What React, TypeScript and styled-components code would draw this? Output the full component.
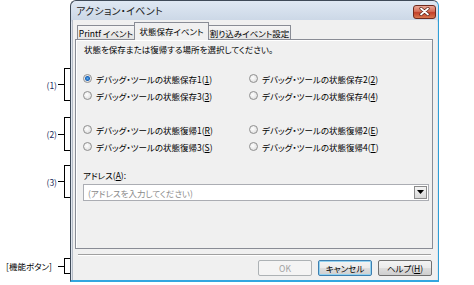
import React from 'react';
import styled, {createGlobalStyle, css} from "styled-components";

const font = `"Noto Sans CJK JP", "Noto Sans", sans-serif`;

const GlobalStyle = createGlobalStyle`
    html, body {
        margin: 0;
        padding: 0;
        background: #ffffff;
    }
    body {
        font-family: ${font};
        font-feature-settings: "palt";
        font-size: 8.5px;
        color: #000000;
    }
`;

type CalloutPropsType = {
    label: string
    top: number
    height: number
    wide?: boolean
}

const Callout = (props: CalloutPropsType) => {
    return (
        <StyledCallout $top={props.top} $height={props.height}>
            <CalloutLabel $wide={props.wide}>{props.label}</CalloutLabel>
            <Dash/>
            <Bracket/>
        </StyledCallout>
    );
};

type RadioPropsType = {
    text: string
    keyChar: string
    checked?: boolean
}

const Radio = (props: RadioPropsType) => {
    return (
        <RadioRow>
            <RadioCircle $checked={props.checked}/>
            <span>{props.text}(<u>{props.keyChar}</u>)</span>
        </RadioRow>
    );
};

const CloseIcon = () => (
    <svg width="11" height="9" viewBox="0 0 11 9">
        <path d="M2 1.5 L9 7.5 M9 1.5 L2 7.5" stroke="#5a2218" strokeWidth="3.2" strokeLinecap="round"/>
        <path d="M2 1.5 L9 7.5 M9 1.5 L2 7.5" stroke="#ffffff" strokeWidth="1.8" strokeLinecap="round"/>
    </svg>
);

export default function App() {
    return (
        <>
            <GlobalStyle/>
            <Page>
                <Annotations>
                    <Callout label={"(1)"} top={68} height={33}/>
                    <Callout label={"(2)"} top={16} height={34}/>
                    <Callout label={"(3)"} top={14} height={33}/>
                    <Callout label={"[機能ボタン]"} top={60} height={16} wide/>
                </Annotations>
                <Window>
                    <TitleBar>
                        <Title>アクション・イベント</Title>
                        <CloseButton><CloseIcon/></CloseButton>
                    </TitleBar>
                    <Body>
                        <TabBar>
                            <Tab $w={58}>Printf イベント</Tab>
                            <Tab $w={75} $active>状態保存イベント</Tab>
                            <Tab $w={83}>割り込みイベント設定</Tab>
                        </TabBar>
                        <Panel>
                            <Description>状態を保存または復帰する場所を選択してください。</Description>
                            <RadioGrid $mt={15}>
                                <Radio text={"デバッグ・ツールの状態保存1"} keyChar={"1"} checked/>
                                <Radio text={"デバッグ・ツールの状態保存2"} keyChar={"2"}/>
                                <Radio text={"デバッグ・ツールの状態保存3"} keyChar={"3"}/>
                                <Radio text={"デバッグ・ツールの状態保存4"} keyChar={"4"}/>
                            </RadioGrid>
                            <RadioGrid $mt={17}>
                                <Radio text={"デバッグ・ツールの状態復帰1"} keyChar={"R"}/>
                                <Radio text={"デバッグ・ツールの状態復帰2"} keyChar={"E"}/>
                                <Radio text={"デバッグ・ツールの状態復帰3"} keyChar={"S"}/>
                                <Radio text={"デバッグ・ツールの状態復帰4"} keyChar={"T"}/>
                            </RadioGrid>
                            <FieldLabel>アドレス(<u>A</u>):</FieldLabel>
                            <Combo>
                                <Placeholder>(アドレスを入力してください)</Placeholder>
                                <ComboButton>
                                    <svg width="7" height="5" viewBox="0 0 7 5">
                                        <path d="M0 0 H7 L3.5 4 Z" fill="#000000"/>
                                    </svg>
                                </ComboButton>
                            </Combo>
                        </Panel>
                        <Separator/>
                        <ButtonRow>
                            <Button $disabled>OK</Button>
                            <Button $default>キャンセル</Button>
                            <Button>ヘルプ(<u>H</u>)</Button>
                        </ButtonRow>
                    </Body>
                </Window>
            </Page>
        </>
    );
}

const Page = styled.div`
    display: flex;
    align-items: flex-start;
    width: 474px;
    height: 285px;
    overflow: hidden;
`;

const Annotations = styled.div`
    display: flex;
    flex-direction: column;
    width: 70px;
    flex-shrink: 0;
`;

const StyledCallout = styled.div<{ $top: number, $height: number }>`
    display: flex;
    align-items: center;
    justify-content: flex-end;
    margin-top: ${props => props.$top}px;
    height: ${props => props.$height}px;
`;

const CalloutLabel = styled.span<{ $wide?: boolean }>`
    font-size: 8.5px;
    line-height: 10px;
    color: ${props => props.$wide ? "#000000" : "#1b2c5c"};
    margin-right: ${props => props.$wide ? "6px" : "1px"};
    white-space: nowrap;
`;

const Dash = styled.div`
    width: 6px;
    height: 1px;
    background: #000000;
`;

const Bracket = styled.div`
    width: 6px;
    height: 100%;
    box-sizing: border-box;
    border: 1px solid #000000;
    border-right: none;
`;

const Window = styled.div`
    width: 369px;
    height: 282px;
    box-sizing: border-box;
    display: flex;
    flex-direction: column;
    border: 1px solid #3f4a58;
    border-right-color: #2f9fd6;
    border-bottom: 2px solid #33a7e0;
    border-radius: 6px 6px 0 0;
    background: linear-gradient(#dfe8f3, #cbd7e6 20px, #dfe5ee 21px);
    flex-shrink: 0;
`;

const TitleBar = styled.div`
    display: flex;
    align-items: center;
    justify-content: space-between;
    height: 19px;
    padding: 0 2px 0 5px;
`;

const Title = styled.span`
    font-size: 10px;
    color: #1e1e1e;
    letter-spacing: 0.3px;
`;

const CloseButton = styled.div`
    display: flex;
    align-items: center;
    justify-content: center;
    width: 23px;
    height: 14px;
    box-sizing: border-box;
    margin-top: 2px;
    border: 1px solid #6f2a1e;
    border-radius: 3px;
    background: linear-gradient(#eaa898, #d66e58 45%, #c3402a 55%, #d9774f);
`;

const Body = styled.div`
    flex: 1;
    display: flex;
    flex-direction: column;
    margin: 0 1px 0 1px;
    padding: 2px 4px 0 2px;
    background: #f0f0f0;
    border-left: 1px solid #b5bcc6;
`;

const TabBar = styled.div`
    display: flex;
    align-items: flex-end;
    height: 17px;
    padding-left: 2px;
    position: relative;
    z-index: 1;
`;

const Tab = styled.div<{ $w: number, $active?: boolean }>`
    width: ${props => props.$w}px;
    height: 14px;
    box-sizing: border-box;
    display: flex;
    align-items: center;
    justify-content: center;
    border: 1px solid #898c95;
    border-bottom: none;
    margin-right: -1px;
    background: linear-gradient(#f5f5f5, #e3e3e3);
    white-space: nowrap;
    ${props => props.$active && css`
        height: 18px;
        margin-bottom: -1px;
        background: #f0f0f0;
        padding-bottom: 2px;
        position: relative;
        z-index: 2;
    `}
`;

const Panel = styled.div`
    height: 210px;
    box-sizing: border-box;
    display: flex;
    flex-direction: column;
    padding: 3px 6px 0 7px;
    border: 1px solid #898c95;
    box-shadow: inset 1px 1px 0 #ffffff;
    background: #f0f0f0;
`;

const Description = styled.div`
    line-height: 12px;
    margin-left: 1px;
`;

const RadioGrid = styled.div<{ $mt: number }>`
    display: grid;
    grid-template-columns: 166px 1fr;
    grid-auto-rows: 17px;
    margin-top: ${props => props.$mt}px;
`;

const RadioRow = styled.div`
    display: flex;
    align-items: center;
    gap: 4px;
    white-space: nowrap;
`;

const RadioCircle = styled.span<{ $checked?: boolean }>`
    width: 9px;
    height: 9px;
    box-sizing: border-box;
    border-radius: 50%;
    border: 1px solid #8f8f8f;
    background: ${props => props.$checked
        ? "radial-gradient(circle, #5ab0f0 0, #1c63b8 2px, #e8e8e8 3px, #ffffff 4px)"
        : "radial-gradient(circle at 40% 40%, #ffffff, #d6d6d6)"};
`;

const FieldLabel = styled.div`
    line-height: 12px;
    margin-top: 14px;
`;

const Combo = styled.div`
    display: flex;
    align-items: center;
    justify-content: space-between;
    width: 346px;
    height: 17px;
    box-sizing: border-box;
    margin-top: 3px;
    padding: 0 1px 0 4px;
    border: 1px solid #abadb3;
    background: #ffffff;
`;

const Placeholder = styled.span`
    color: #8a8a8a;
`;

const ComboButton = styled.div`
    display: flex;
    align-items: center;
    justify-content: center;
    width: 13px;
    height: 13px;
    box-sizing: border-box;
    border: 1px solid #8a8a8a;
    background: linear-gradient(#f4f4f4, #d8d8d8);
`;

const Separator = styled.div`
    height: 1px;
    margin: 5px 2px 0 3px;
    background: #a0a0a0;
    border-bottom: 1px solid #ffffff;
`;

const ButtonRow = styled.div`
    display: flex;
    justify-content: flex-end;
    gap: 6px;
    margin-top: 4px;
    padding-right: 1px;
`;

const Button = styled.div<{ $disabled?: boolean, $default?: boolean }>`
    width: 54px;
    height: 16px;
    box-sizing: border-box;
    display: flex;
    align-items: center;
    justify-content: center;
    border: 1px solid #707070;
    border-radius: 2px;
    background: linear-gradient(#f3f3f3, #ebebeb 50%, #dddddd 51%, #cfcfcf);
    ${props => props.$default && css`
        border-color: #3c7fb1;
        box-shadow: inset 0 0 0 1px #93d2f0;
    `}
    ${props => props.$disabled && css`
        border-color: #adb2b5;
        background: #f4f4f4;
        color: #a0a0a0;
    `}
`;
